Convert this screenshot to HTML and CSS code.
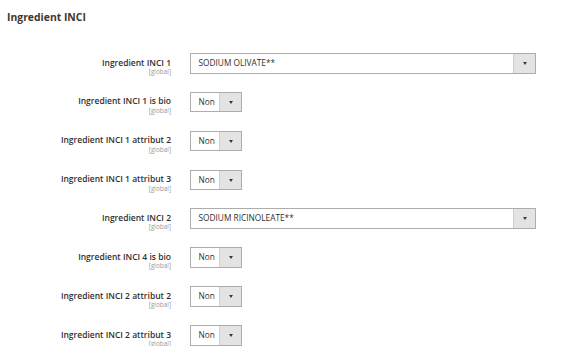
FILE: index.html
```html
<!DOCTYPE html>
<html lang="en">
<head>
    <meta charset="UTF-8">
    <title>Ingredient INCI</title>
    <link rel="stylesheet" href="styles.css">
</head>
<body>
    <div class="section">
        <h2 class="section-title">Ingredient INCI</h2>

        <div class="fields">
            <div class="field-label">Ingredient INCI 1<span class="scope">[global]</span></div>
            <div class="select select-wide"><span class="select-value">SODIUM OLIVATE**</span><span class="select-btn"></span></div>

            <div class="field-label">Ingredient INCI 1 is bio<span class="scope">[global]</span></div>
            <div class="select"><span class="select-value">Non</span><span class="select-btn"></span></div>

            <div class="field-label">Ingredient INCI 1 attribut 2<span class="scope">[global]</span></div>
            <div class="select"><span class="select-value">Non</span><span class="select-btn"></span></div>

            <div class="field-label">Ingredient INCI 1 attribut 3<span class="scope">[global]</span></div>
            <div class="select"><span class="select-value">Non</span><span class="select-btn"></span></div>

            <div class="field-label">Ingredient INCI 2<span class="scope">[global]</span></div>
            <div class="select select-wide"><span class="select-value">SODIUM RICINOLEATE**</span><span class="select-btn"></span></div>

            <div class="field-label">Ingredient INCI 4 is bio<span class="scope">[global]</span></div>
            <div class="select"><span class="select-value">Non</span><span class="select-btn"></span></div>

            <div class="field-label">Ingredient INCI 2 attribut 2<span class="scope">[global]</span></div>
            <div class="select"><span class="select-value">Non</span><span class="select-btn"></span></div>

            <div class="field-label">Ingredient INCI 2 attribut 3<span class="scope">[global]</span></div>
            <div class="select"><span class="select-value">Non</span><span class="select-btn"></span></div>
        </div>
    </div>
</body>
</html>
```

FILE: styles.css
```css
html{
    background: #ffffff;
}

body{
    margin: 0;
    font-family: "Open Sans", "Liberation Sans", sans-serif;
    color: #303030;
}

.section{
    padding: 0 34px 0 7px;
}

.section-title{
    margin: 0;
    padding-top: 11px;
    height: 42px;
    box-sizing: border-box;
    font-size: 10.4px;
    font-weight: 700;
    line-height: 12px;
    color: #41362f;
}

.fields{
    display: grid;
    grid-template-columns: 164px 1fr;
    grid-auto-rows: 20.5px;
    column-gap: 19px;
    row-gap: 18.36px;
    padding-top: 11px;
}

.field-label{
    text-align: right;
    font-size: 8.5px;
    font-weight: 600;
    line-height: 10.5px;
    padding-top: 4.5px;
}

.scope{
    display: block;
    font-size: 6.4px;
    font-weight: 400;
    line-height: 8px;
    color: #999999;
}

.select{
    display: flex;
    width: 52px;
    height: 20.5px;
    box-sizing: border-box;
    border: 1px solid #adadad;
    background: #ffffff;
    font-size: 8.3px;
    line-height: 18.5px;
    color: #303030;
}

.select-wide{
    width: auto;
}

.select-value{
    flex: 1;
    padding-left: 7.5px;
    white-space: nowrap;
}

.select-btn{
    width: 21px;
    position: relative;
    background: #e3e3e3;
    border-left: 1px solid #cfcfcf;
}

.select-btn::after{
    content: "";
    position: absolute;
    left: 8.5px;
    top: 8px;
    border-left: 2.5px solid transparent;
    border-right: 2.5px solid transparent;
    border-top: 3px solid #41362f;
}
```
